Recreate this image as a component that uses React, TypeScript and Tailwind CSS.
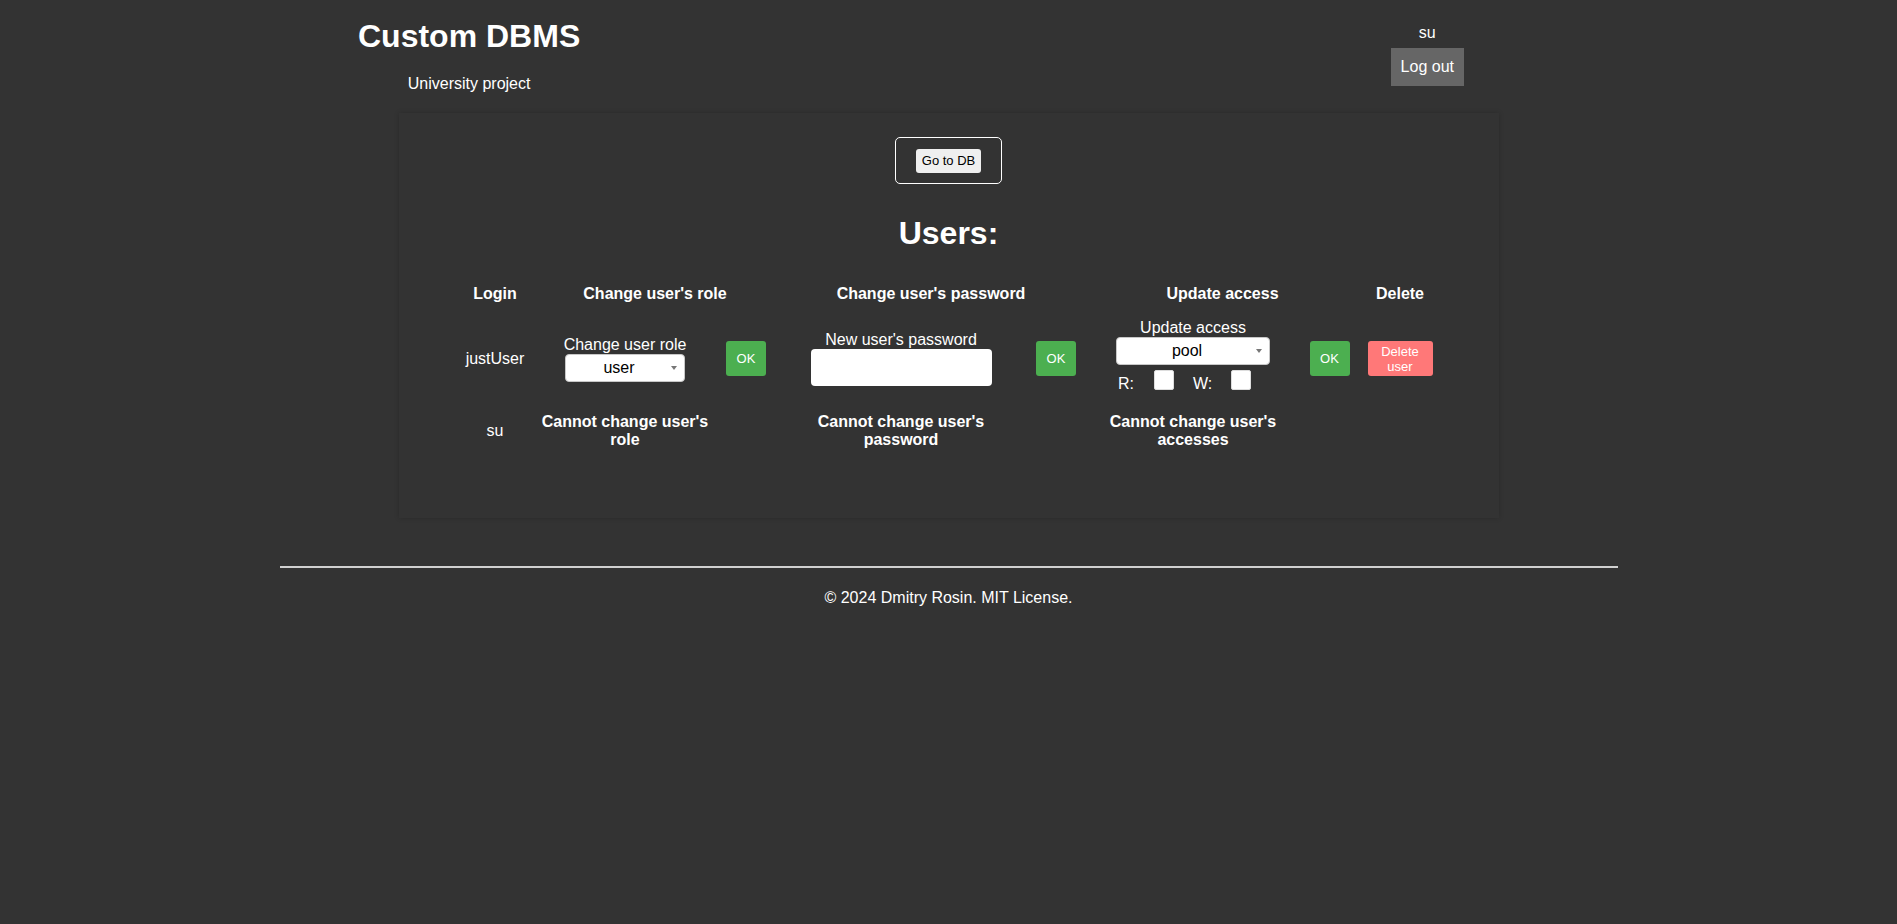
import React from "react";

const COLS = "grid-cols-[78px_182px_60px_250px_60px_214px_59px_82px]";

function SelectBox({ value, width }: { value: string; width: string }) {
  return (
    <div className={`relative ${width}`}>
      <select
        defaultValue={value}
        className="h-[28px] w-full appearance-none rounded-[4px] border border-[#c8c8c8] bg-white pr-[12px] text-center text-[16px] text-black"
      >
        <option value={value}>{value}</option>
      </select>
      <span className="pointer-events-none absolute right-[8px] top-[12px] h-0 w-0 border-x-[3.5px] border-t-[4px] border-x-transparent border-t-[#777]" />
    </div>
  );
}

function OkButton() {
  return (
    <button type="button" className="h-[35px] w-[40px] rounded-[3px] bg-[#4caf50] text-[13px] text-white">
      OK
    </button>
  );
}

function Checkbox() {
  return <input type="checkbox" className="h-[20px] w-[20px] appearance-none rounded-[2px] border border-[#ddd] bg-white" />;
}

export default function App() {
  return (
    <div className="min-h-screen bg-[#333] font-['Liberation_Sans',Arial,sans-serif] text-[16px] text-white">
      <header className="flex h-[113px] justify-between pl-[358px] pr-[433px]">
        <div className="flex flex-col items-center pt-[18px]">
          <h1 className="text-[32px] font-bold leading-[36px]">Custom DBMS</h1>
          <p className="mt-[21px] leading-[18px]">University project</p>
        </div>
        <div className="flex flex-col items-center pt-[24px]">
          <span className="leading-[18px]">su</span>
          <button type="button" className="mt-[6px] h-[38px] bg-[#666] px-[10px] text-white">
            Log out
          </button>
        </div>
      </header>

      <main className="mx-auto flex h-[405px] w-[1100px] flex-col items-center pt-[24px] shadow-[0_0_5px_rgba(0,0,0,0.2)]">
        <form className="rounded-[5px] border border-white px-[20px] py-[10px]">
          <button type="button" className="h-[24px] rounded-[3px] bg-[#efefef] px-[6px] text-[13px] text-black">
            Go to DB
          </button>
        </form>

        <h2 className="mt-[31px] text-[32px] font-bold leading-[36px]">Users:</h2>

        <div className={`mt-[24px] grid ${COLS} grid-rows-[38px_92px_52px] items-center text-center`}>
          <div className="font-bold leading-[18px]">Login</div>
          <div className="col-span-2 font-bold leading-[18px]">Change user's role</div>
          <div className="col-span-2 font-bold leading-[18px]">Change user's password</div>
          <div className="col-span-2 font-bold leading-[18px]">Update access</div>
          <div className="font-bold leading-[18px]">Delete</div>

          <div className="leading-[18px]">justUser</div>
          <div className="flex flex-col items-center">
            <label className="leading-[18px]">Change user role</label>
            <SelectBox value="user" width="w-[120px]" />
          </div>
          <div className="flex justify-center">
            <OkButton />
          </div>
          <div className="flex flex-col items-center">
            <label className="leading-[18px]">New user's password</label>
            <input type="password" className="h-[37px] w-[181px] rounded-[4px] bg-white" />
          </div>
          <div className="flex justify-center">
            <OkButton />
          </div>
          <div className="flex flex-col items-center pb-[5px]">
            <label className="leading-[18px]">Update access</label>
            <SelectBox value="pool" width="w-[154px]" />
            <div className="mt-[5px] flex w-[154px] items-start pl-[2px]">
              <span className="mt-[5px] leading-[18px]">R:</span>
              <span className="ml-[20px] flex">
                <Checkbox />
              </span>
              <span className="ml-[19px] mt-[5px] leading-[18px]">W:</span>
              <span className="ml-[19px] flex">
                <Checkbox />
              </span>
            </div>
          </div>
          <div className="flex justify-center">
            <OkButton />
          </div>
          <div className="flex justify-center">
            <button type="button" className="h-[35px] w-[65px] rounded-[3px] bg-[#ff7878] text-[13px] leading-[15px] text-white">
              Delete
              <br />
              user
            </button>
          </div>

          <div className="leading-[18px]">su</div>
          <div className="flex justify-center">
            <span className="w-[180px] font-bold leading-[18px]">Cannot change user's role</span>
          </div>
          <div />
          <div className="flex justify-center">
            <span className="w-[190px] font-bold leading-[18px]">Cannot change user's password</span>
          </div>
          <div />
          <div className="flex justify-center">
            <span className="w-[190px] font-bold leading-[18px]">Cannot change user's accesses</span>
          </div>
          <div />
          <div />
        </div>
      </main>

      <footer className="pb-[40px]">
        <div className="mx-auto mt-[48px] h-[2px] w-[1338px] bg-[#d0d0d0]" />
        <p className="mt-[21px] text-center leading-[18px]">© 2024 Dmitry Rosin. MIT License.</p>
      </footer>
    </div>
  );
}
